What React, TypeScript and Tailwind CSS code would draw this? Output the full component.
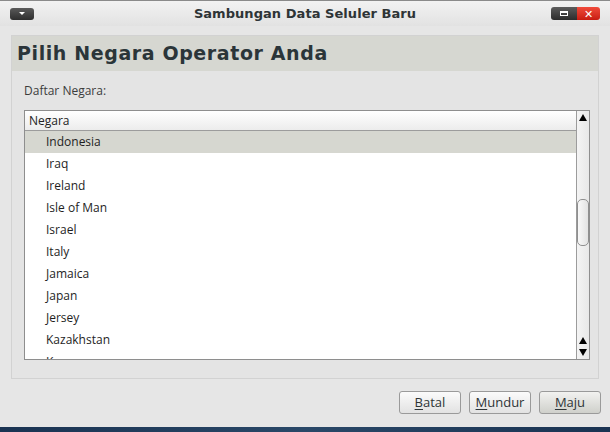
import React from 'react';

const countries = ['Indonesia', 'Iraq', 'Ireland', 'Isle of Man', 'Israel', 'Italy', 'Jamaica', 'Japan', 'Jersey', 'Kazakhstan', 'Kenya'];

const Btn: React.FC<{ u: string; rest: string; active?: boolean }> = ({ u, rest, active }) => (
    <button
        className={`w-[62px] h-[23px] rounded-[3px] border border-[#9a9a9a] text-[13px] text-[#2e3436] ${
            active ? 'bg-gradient-to-b from-[#f2f2f0] to-[#cfd0cb]' : 'bg-gradient-to-b from-[#fbfbfb] to-[#e2e2e2]'
        }`}
    >
        <span className="underline underline-offset-2">{u}</span>
        {rest}
    </button>
);

const App: React.FC = () => {
    return (
        <div className="w-[610px] h-[432px] flex flex-col bg-[#e6e6e6] overflow-hidden" style={{ fontFamily: '"Open Sans", "DejaVu Sans", sans-serif' }}>
            <div className="h-px bg-[#8a8a8a]" />
            <div className="h-[25px] flex items-center px-[10px] bg-gradient-to-b from-[#f2f2f2] to-[#e2e2e2]">
                <div className="w-[49px]">
                    <div className="w-[24px] h-[12px] rounded-[3px] bg-gradient-to-b from-[#5a5a5a] to-[#2e2e2e] flex items-center justify-center">
                        <div className="w-0 h-0 border-l-[3px] border-r-[3px] border-t-[3px] border-l-transparent border-r-transparent border-t-white" />
                    </div>
                </div>
                <div
                    className="flex-1 text-center text-[13px] font-bold tracking-[0.05px] text-[#2e3436]"
                    style={{ fontFamily: '"DejaVu Sans", sans-serif' }}
                >
                    Sambungan Data Seluler Baru
                </div>
                <div className="flex h-[13px] rounded-[3px] overflow-hidden">
                    <div className="w-[26px] bg-gradient-to-b from-[#5c5c5c] to-[#2c2c2c] flex items-center justify-center">
                        <div className="w-[8px] h-[5px] border border-white border-t-2" />
                    </div>
                    <div className="w-[23px] bg-gradient-to-b from-[#f04a3a] to-[#c81a10] flex items-center justify-center text-white text-[11px] leading-none font-bold">
                        ✕
                    </div>
                </div>
            </div>
            <div className="flex-1 flex flex-col px-[11px] pt-[9px]">
                <div className="h-[344px] border border-[#d2d2d2] bg-[#e4e4e4] flex flex-col">
                    <div
                        className="h-[35px] bg-[#d6d7d1] px-[5px] flex items-center text-[19px] font-bold tracking-[0.6px] text-[#2b3539]"
                        style={{ fontFamily: '"DejaVu Sans", sans-serif' }}
                    >
                        Pilih Negara Operator Anda
                    </div>
                    <div className="px-[12px] pt-[11px] text-[12px] text-[#3c3c3c] h-[39px]">Daftar Negara:</div>
                    <div className="ml-[12px] w-[566px] h-[250px] border border-[#8e8e8e] bg-white flex">
                        <div className="flex-1 flex flex-col overflow-hidden">
                            <div className="h-[20px] shrink-0 border-b border-[#9c9c9c] bg-gradient-to-b from-[#ffffff] to-[#ececec] px-[4px] text-[12px] leading-[19px] text-[#222]">
                                Negara
                            </div>
                            {countries.map((c, i) => (
                                <div
                                    key={c}
                                    className={`h-[22px] shrink-0 pl-[21px] text-[12px] leading-[22px] text-[#1e1e1e] ${i === 0 ? 'bg-[#d6d7d0]' : ''}`}
                                >
                                    {c}
                                </div>
                            ))}
                        </div>
                        <div className="w-[13px] border-l border-[#9c9c9c] bg-gradient-to-r from-[#f4f4f4] to-[#e8e8e8] flex flex-col items-center">
                            <div className="mt-[3px] w-0 h-0 border-l-[4px] border-r-[4px] border-b-[7px] border-l-transparent border-r-transparent border-b-black" />
                            <div className="mt-[78px] w-[12px] h-[47px] rounded-[5px] border border-[#8f8f8f] bg-gradient-to-r from-[#f8f8f8] to-[#e2e2e2]" />
                            <div className="mt-auto mb-[3px] flex flex-col items-center gap-[5px]">
                                <div className="w-0 h-0 border-l-[4px] border-r-[4px] border-b-[7px] border-l-transparent border-r-transparent border-b-black" />
                                <div className="w-0 h-0 border-l-[4px] border-r-[4px] border-t-[7px] border-l-transparent border-r-transparent border-t-black" />
                            </div>
                        </div>
                    </div>
                </div>
                <div className="flex justify-end gap-[8px] mt-[12px] mr-[-2px]">
                    <Btn u="B" rest="atal" />
                    <Btn u="M" rest="undur" />
                    <Btn u="M" rest="aju" active />
                </div>
            </div>
            <div className="h-[5px] bg-gradient-to-r from-[#1a3352] via-[#2a4868] to-[#1a3352]" />
        </div>
    );
};

export default App;
